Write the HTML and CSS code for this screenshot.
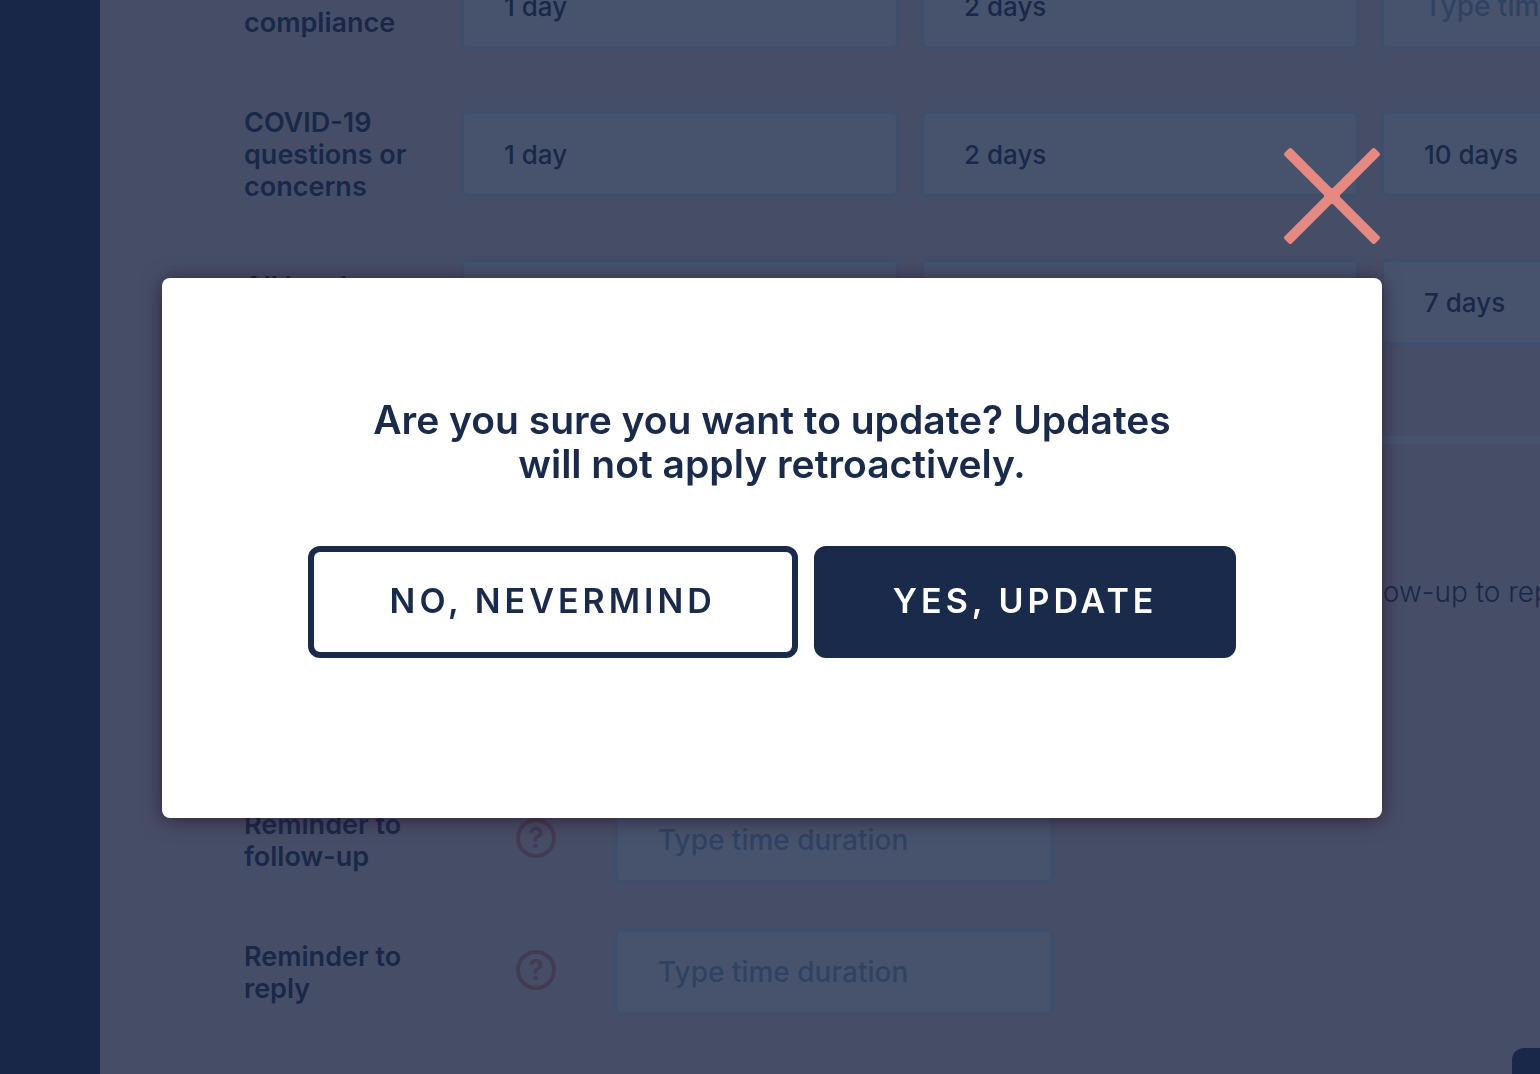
FILE: index.html
```html
<!DOCTYPE html>
<html lang="en">
<head>
    <meta charset="UTF-8">
    <meta name="viewport" content="width=device-width, initial-scale=1.0">
    <title>Response Times</title>
    <link rel="stylesheet" href="styles.css">
</head>
<body>
    <div class="page">
        <nav class="sidebar"></nav>

        <main class="content">
            <form>
                <div class="row">
                    <label for="compliance1">Treatment compliance</label>
                    <input type="text" id="compliance1" value="1 day" placeholder="Type time duration">
                    <input type="text" aria-label="Compliance follow-up" value="2 days" placeholder="Type time duration">
                    <input type="text" aria-label="Compliance close" placeholder="Type time duration">
                </div>
                <div class="row">
                    <label for="covid1">COVID-19 questions or concerns</label>
                    <input type="text" id="covid1" value="1 day" placeholder="Type time duration">
                    <input type="text" aria-label="COVID-19 follow-up" value="2 days" placeholder="Type time duration">
                    <input type="text" aria-label="COVID-19 close" value="10 days" placeholder="Type time duration">
                </div>
                <div class="row">
                    <label for="legal1">All legal concerns</label>
                    <input type="text" id="legal1" value="1 day" placeholder="Type time duration">
                    <input type="text" aria-label="Legal follow-up" value="2 days" placeholder="Type time duration">
                    <input type="text" aria-label="Legal close" value="7 days" placeholder="Type time duration">
                </div>

                <hr class="divider">

                <h2>Reminders</h2>
                <p class="intro">Set how long the team has before a reminder is sent to the people assigned with the follow-up to reply</p>

                <div class="reminder">
                    <label for="reminderClose">Reminder to close</label>
                    <span class="help">?</span>
                    <input type="text" id="reminderClose" placeholder="Type time duration">
                </div>
                <div class="reminder">
                    <label for="reminderFollowUp">Reminder to follow-up</label>
                    <span class="help">?</span>
                    <input type="text" id="reminderFollowUp" placeholder="Type time duration">
                </div>
                <div class="reminder">
                    <label for="reminderReply">Reminder to reply</label>
                    <span class="help">?</span>
                    <input type="text" id="reminderReply" placeholder="Type time duration">
                </div>

                <button type="button" class="btn btn-dark save">Update</button>
            </form>
        </main>
    </div>

    <div class="overlay">
        <div class="modal" role="dialog" aria-modal="true" aria-labelledby="modalTitle">
            <button type="button" class="close" aria-label="Close">
                <svg viewBox="0 0 98 98" width="98" height="98" fill="#e58982">
                    <rect x="-15" y="44" width="128" height="10" rx="2" transform="rotate(45 49 49)"/>
                    <rect x="-15" y="44" width="128" height="10" rx="2" transform="rotate(-45 49 49)"/>
                    <circle cx="49" cy="49" r="8"/>
                </svg>
            </button>
            <h1 id="modalTitle">Are you sure you want to update? Updates will not apply retroactively.</h1>
            <div class="actions">
                <button type="button" class="btn btn-light">NO, NEVERMIND</button>
                <button type="button" class="btn btn-dark">YES, UPDATE</button>
            </div>
        </div>
    </div>
</body>
</html>
```

FILE: styles.css
```css
* {
    box-sizing: border-box;
}

body {
    margin: 0;
    font-family: Inter, "Open Sans", sans-serif;
    font-size: 26px;
    line-height: 32px;
    color: #192849;
}

.page {
    display: flex;
    height: 100vh;
    overflow: hidden;
    background: #fbe2df;
}

.sidebar {
    flex: 0 0 100px;
    background: #182747;
}

/* the page is scrolled part of the way down behind the dialog */
.content {
    flex: 1;
    min-width: 0;
    margin-top: -43px;
    padding-left: 144px;
}

.row {
    display: grid;
    grid-template-columns: 196px repeat(3, 440px);
    column-gap: 20px;
    align-items: center;
    height: 98px;
    margin-bottom: 50px;
}

label {
    max-width: 180px;
    padding-top: 2px;
    font-size: 27px;
    font-weight: 600;
}

input {
    width: 440px;
    height: 88px;
    padding: 0 40px;
    border: 4px solid #d8e4f5;
    border-radius: 8px;
    background: #fff;
    font-family: inherit;
    font-size: 26px;
    font-weight: 500;
    color: #192849;
}

input::placeholder {
    font-size: 28px;
    color: #8caac6;
    opacity: 1;
}

.divider {
    width: 1600px;
    height: 8px;
    margin: 85px 0 52px;
    border: 0;
    background: #fff;
}

h2 {
    margin: 0 0 40px;
    font-size: 36px;
    line-height: 40px;
}

.intro {
    margin: 0 0 56px;
    font-size: 28px;
    font-weight: 300;
    white-space: nowrap;
}

.reminder {
    display: grid;
    grid-template-columns: 272px 98px 440px;
    align-items: center;
    margin-bottom: 44px;
}

.help {
    width: 40px;
    height: 40px;
    margin-bottom: 4px;
    border: 4px solid #e58982;
    border-radius: 50%;
    font-size: 28px;
    font-weight: 700;
    text-align: center;
    color: #e58982;
}

.btn {
    height: 112px;
    border: 6px solid #1a2a4a;
    border-radius: 12px;
    font-family: inherit;
    font-size: 34px;
    font-weight: 600;
    letter-spacing: 4px;
    cursor: pointer;
}

.btn-light {
    padding: 0 76px 4px;
    background: #fff;
    color: #1a2a4a;
}

.btn-dark {
    padding: 0 73px 4px;
    background: #1a2a4a;
    color: #fff;
}

.save {
    margin: -12px 0 0 1268px;
}

.overlay {
    position: fixed;
    inset: 0;
    display: flex;
    align-items: center;
    justify-content: center;
    padding: 22px 0 0 4px;
    background: rgba(25, 40, 73, 0.8);
}

.modal {
    position: relative;
    width: 1220px;
    max-width: 90%;
    padding: 120px 140px 160px;
    border-radius: 8px;
    background: #fff;
    box-shadow: 0 2px 20px rgba(40, 16, 40, 0.7);
    text-align: center;
}

.close {
    position: absolute;
    right: 1px;
    bottom: calc(100% + 33px);
    padding: 0;
    border: 0;
    background: none;
    cursor: pointer;
}

.close svg {
    display: block;
}

h1 {
    max-width: 820px;
    margin: 0 auto 60px;
    font-size: 39px;
    font-weight: 600;
    line-height: 44px;
    color: #1a2a4a;
}

.actions {
    display: flex;
    justify-content: center;
    gap: 16px;
}
```
